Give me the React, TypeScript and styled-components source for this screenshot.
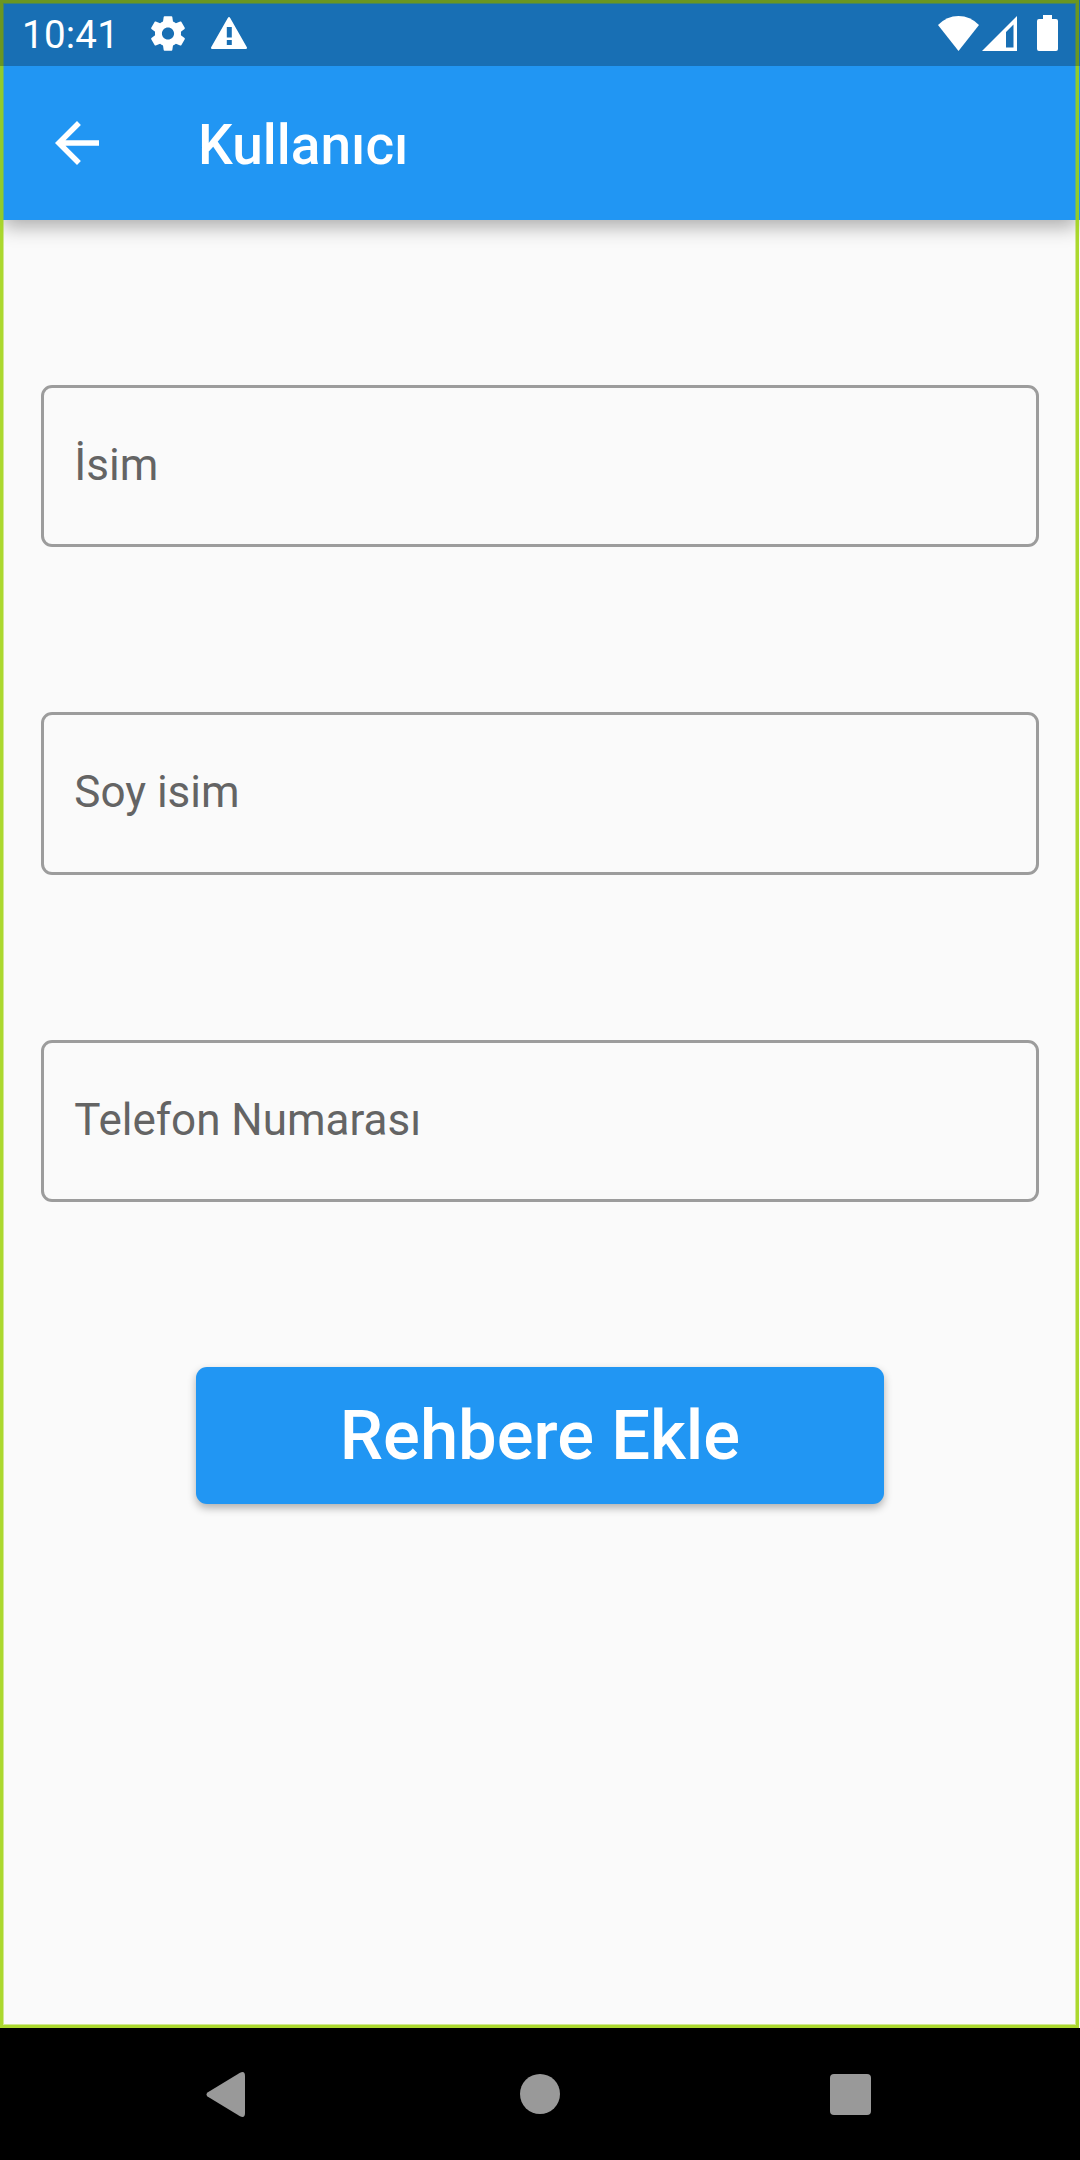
import React from 'react';
import styled, { createGlobalStyle } from 'styled-components';

const GlobalStyle = createGlobalStyle`
  * { box-sizing: border-box; }
  body { margin: 0; background: #000; }
`;

const Phone = styled.div`
  display: flex;
  flex-direction: column;
  width: 1080px;
  height: 2160px;
  overflow: hidden;
  font-family: Roboto, "Noto Sans", sans-serif;
`;

const Screen = styled.div`
  position: relative;
  flex: 1;
  display: flex;
  flex-direction: column;
  background: #fafafa;
`;

const FocusFrame = styled.div`
  position: absolute;
  inset: 0 1px 0 0;
  border: 3px solid rgba(159, 211, 17, 0.88);
  box-shadow: inset 0 0 0 1px rgba(159, 211, 17, 0.45);
  pointer-events: none;
`;

const StatusBar = styled.header`
  position: relative;
  z-index: 1;
  display: flex;
  align-items: center;
  height: 66px;
  padding: 0 22px 0 22px;
  background: rgba(0, 0, 0, 0.26);
  color: #fff;
`;

const Clock = styled.span`
  width: 129px;
  padding-top: 3px;
  font-size: 38.5px;
  line-height: 66px;
  letter-spacing: 0.25px;
`;

const Icon = styled.svg<{ $gap?: number }>`
  flex: none;
  display: block;
  fill: currentColor;
  margin-left: ${(p) => p.$gap ?? 0}px;
`;

const Spacer = styled.div`
  flex: 1;
`;

const TopArea = styled.div`
  background: #2196f3;
  box-shadow: 0 10px 18px -3px rgba(0, 0, 0, 0.31);
`;

const AppBar = styled.nav`
  display: flex;
  align-items: center;
  height: 154px;
  padding-left: 44px;
  color: #fff;
`;

const BackButton = styled.button`
  width: 66px;
  height: 66px;
  padding: 0;
  border: 0;
  background: none;
  color: inherit;
`;

const Title = styled.h1`
  margin: 0 0 0 88px;
  padding-top: 4px;
  font-size: 55px;
  font-weight: 500;
  line-height: 66px;
`;

const Form = styled.form`
  display: flex;
  flex-direction: column;
  align-items: center;
  gap: 165px;
  padding: 165px 41.25px 0;
`;

const Field = styled.label`
  display: flex;
  align-items: center;
  width: 100%;
  height: 162.25px;
  padding: 0 30px 2px;
  border: 3px solid #9c9c9c;
  border-radius: 11px;
  color: #646464;
  font-size: 44px;
`;

const SubmitButton = styled.button`
  width: 687.5px;
  height: 137.5px;
  padding: 0;
  border: 0;
  border-radius: 11px;
  background: #2196f3;
  box-shadow: 0 4px 8px rgba(0, 0, 0, 0.3);
  color: #fff;
  font-family: inherit;
  font-size: 68.75px;
  font-weight: 500;
  line-height: 80px;
`;

const NavBar = styled.footer`
  display: flex;
  align-items: center;
  height: 132px;
  padding-left: 206px;
  background: #000;
  color: #999;
`;

const fields = ['İsim', 'Soy isim', 'Telefon Numarası'];

export default function App() {
  return (
    <Phone>
      <GlobalStyle />
      <Screen>
        <TopArea>
          <StatusBar>
            <Clock>10:41</Clock>
            <Icon width="34" height="35" viewBox="2.2 2 19.6 20">
              <path d="M19.43 12.98c.04-.32.07-.64.07-.98s-.03-.66-.07-.98l2.11-1.65c.19-.15.24-.42.12-.64l-2-3.46c-.12-.22-.39-.3-.61-.22l-2.49 1c-.52-.4-1.08-.73-1.69-.98l-.38-2.65C14.46 2.18 14.25 2 14 2h-4c-.25 0-.46.18-.49.42l-.38 2.65c-.61.25-1.17.59-1.69.98l-2.49-1c-.23-.09-.49 0-.61.22l-2 3.46c-.13.22-.07.49.12.64l2.11 1.65c-.04.32-.07.65-.07.98s.03.66.07.98l-2.11 1.65c-.19.15-.24.42-.12.64l2 3.46c.12.22.39.3.61.22l2.49-1c.52.4 1.08.73 1.69.98l.38 2.65c.03.24.24.42.49.42h4c.25 0 .46-.18.49-.42l.38-2.65c.61-.25 1.17-.59 1.69-.98l2.49 1c.23.09.49 0 .61-.22l2-3.46c.12-.22.07-.49-.12-.64l-2.11-1.65zM12 15.5c-1.93 0-3.5-1.57-3.5-3.5s1.57-3.5 3.5-3.5 3.5 1.57 3.5 3.5-1.57 3.5-3.5 3.5z" />
            </Icon>
            <Icon $gap={26} width="36" height="32" viewBox="0 0 36 32">
              <path fillRule="evenodd" d="M16.800 1 Q18 -1 19.200 1 L36 30.500 Q36 32 35 32 H1 Q0 32 0 30.500Z M15.800 10 H20.800 V20.500 H15.800Z M15.800 23 H20.800 V28 H15.800Z" />
            </Icon>
            <Spacer />
            <Icon width="41" height="35" viewBox="0 0 42 35" preserveAspectRatio="none">
              <path d="M0 9 Q9 0 21 0 T42 9 L21 35Z" />
            </Icon>
            <Icon $gap={3} width="35" height="35" viewBox="0 0 35 35">
              <path fillRule="evenodd" d="M35 0V35H0Z M24 16V31.5H31.5V8.5Z" />
            </Icon>
            <Icon $gap={20} width="21" height="36" viewBox="0 0 21 36">
              <path d="M6 0h9v4h4q2 0 2 2v28q0 2-2 2H2q-2 0-2-2V6q0-2 2-2h4z" />
            </Icon>
          </StatusBar>
          <AppBar>
            <BackButton type="button" aria-label="Geri">
              <Icon width="66" height="66" viewBox="0 0 24 24">
                <path d="M20 11H7.83l5.59-5.59L12 4l-8 8 8 8 1.41-1.41L7.83 13H20v-2z" />
              </Icon>
            </BackButton>
            <Title>Kullanıcı</Title>
          </AppBar>
        </TopArea>
        <Form>
          {fields.map((name) => (
            <Field key={name}>{name}</Field>
          ))}
          <SubmitButton type="button">Rehbere Ekle</SubmitButton>
        </Form>
        <FocusFrame />
      </Screen>
      <NavBar>
        <Icon width="39" height="46" viewBox="0 -1 39 46">
          <path d="M34 .8Q39-1.5 39 4V41Q39 46.500 34 44.200L1.500 24.500Q-.5 22.500 1.500 20.500Z" />
        </Icon>
        <Icon $gap={275} width="40" height="40" viewBox="0 0 40 40">
          <circle cx="20" cy="20" r="20" />
        </Icon>
        <Icon $gap={270} width="41" height="41" viewBox="0 0 41 41">
          <rect width="41" height="41" rx="4" />
        </Icon>
      </NavBar>
    </Phone>
  );
}
